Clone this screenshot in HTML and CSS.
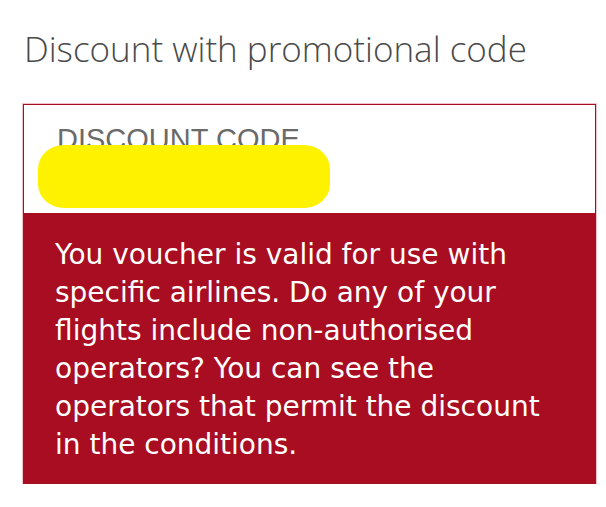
FILE: index.html
```html
<!DOCTYPE html>
<html lang="en">
<head>
<meta charset="utf-8">
<title>Discount with promotional code</title>
<link rel="stylesheet" href="styles.css">
</head>
<body>
  <section class="promo">
    <h2 class="promo-title">Discount with promotional code</h2>
    <div class="promo-box">
      <div class="promo-field">
        <label class="promo-label" for="code">DISCOUNT CODE</label>
        <input class="promo-input" id="code" type="text">
        <span class="promo-mask"></span>
      </div>
      <p class="promo-error">You voucher is valid for use with specific airlines. Do any of your flights include non-authorised operators? You can see the operators that permit the discount in the conditions.</p>
    </div>
  </section>
</body>
</html>
```
FILE: styles.css
```css
html, body {
  margin: 0;
  background: #ffffff;
}

.promo {
  padding: 29px 10px 0 23px;
}

.promo-title {
  margin: 0 0 35px 1px;
  font-family: "Open Sans", sans-serif;
  font-weight: 300;
  font-size: 35px;
  line-height: 40px;
  color: #4a4a4a;
}

.promo-box {
  width: 573px;
  box-sizing: border-box;
  border: 1px solid #a50f22;
  box-shadow: 0 0 0 1px #f2c4ca;
}

.promo-field {
  position: relative;
  height: 108px;
  padding: 19px 0 0 33px;
  box-sizing: border-box;
  background: #ffffff;
}

.promo-label {
  display: block;
  font-family: "Liberation Sans", Arial, sans-serif;
  font-size: 29px;
  line-height: 30px;
  color: #6a6a6a;
}

.promo-input {
  display: block;
  border: 0;
  outline: none;
  padding: 0;
  height: 40px;
  width: 480px;
  background: transparent;
}

/* marker highlight over the entered code */
.promo-mask {
  position: absolute;
  left: 14px;
  top: 40px;
  width: 292px;
  height: 63px;
  border-radius: 26px / 24px;
  background: #fff200;
}

.promo-error {
  margin: 0;
  padding: 23px 50px 19px 31px;
  background: #a80d21;
  color: #ffffff;
  font-family: "DejaVu Sans", Verdana, sans-serif;
  font-size: 28px;
  line-height: 38px;
}
```
